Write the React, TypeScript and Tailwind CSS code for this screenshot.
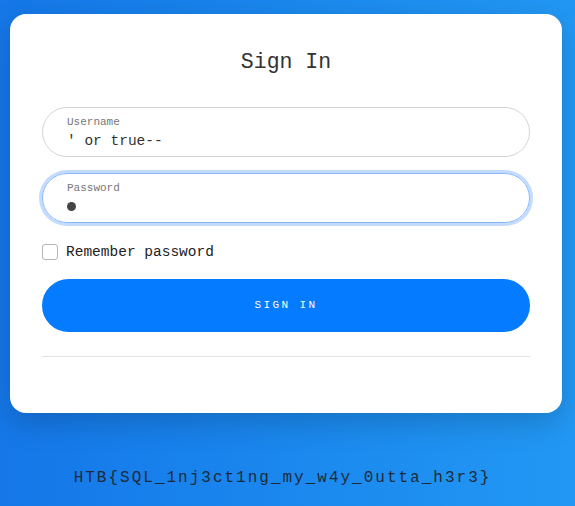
import { useState } from "react";

const mono = { fontFamily: '"Liberation Mono", "DejaVu Sans Mono", monospace' };

const LoginCard = () => {
  const [remember, setRemember] = useState(false);

  return (
    <div className="ml-[10px] mt-[14px] w-[552px] rounded-2xl bg-white px-8 pt-[34px] pb-[56px] shadow-[0_10px_30px_rgba(0,0,0,0.18)]">
      <h1 className="text-center text-[21.5px] leading-[28px] text-[#333]">Sign In</h1>

      <div className="mt-[31px] flex h-[50px] flex-col justify-center rounded-full border border-[#d4d4d4] px-6">
        <label className="text-[11px] leading-[14px] text-[#777]">Username</label>
        <div className="mt-[3px] text-[14.5px] leading-[18px] text-[#333]">' or true--</div>
      </div>

      <div className="mt-4 flex h-[50px] flex-col justify-center rounded-full border border-[#86b7fe] px-6 shadow-[0_0_0_3px_rgba(13,110,253,0.25)]">
        <label className="text-[11px] leading-[14px] text-[#777]">Password</label>
        <div className="mt-[3px] flex h-[18px] items-center">
          <span className="h-[9px] w-[9px] rounded-full bg-[#444]"></span>
        </div>
      </div>

      <label className="mt-[20px] flex items-center gap-2 pt-px text-[14.5px] leading-[16px] text-[#222]">
        <input
          type="checkbox"
          checked={remember}
          onChange={() => setRemember(!remember)}
          className="h-4 w-4 appearance-none rounded-[3px] border border-[#b5b5b5] bg-white"
        />
        Remember password
      </label>

      <button className="mt-[19px] flex h-[53px] w-full items-center justify-center rounded-full bg-[#057bff] text-[11px] tracking-[0.22em] text-white">
        SIGN IN
      </button>

      <hr className="mt-6 border-t border-[#e2e2e2]" />
    </div>
  );
};

export default function App() {
  return (
    <div style={mono} className="h-[506px] w-full overflow-hidden bg-gradient-to-r from-[#1577e8] to-[#2298f4]">
      <LoginCard />
      <p className="mt-[53px] pr-[10px] text-center text-[16px] tracking-[2px] text-[#1f2a38]">
        HTB{"{"}SQL_1nj3ct1ng_my_w4y_0utta_h3r3{"}"}
      </p>
    </div>
  );
}
